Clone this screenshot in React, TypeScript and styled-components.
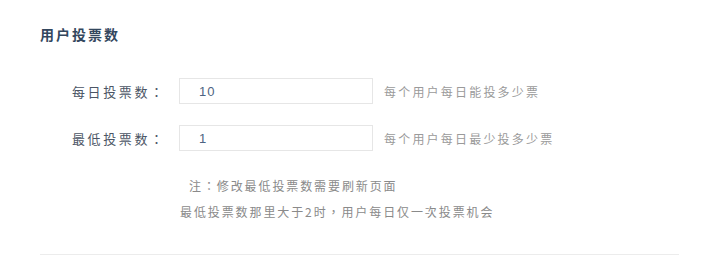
import React from "react";
import styled, { createGlobalStyle } from "styled-components";

const Global = createGlobalStyle`
  html, body { margin: 0; padding: 0; background: #fff; }
  body { font-family: "Noto Sans CJK SC", "Noto Sans", sans-serif; }
`;

const Page = styled.div`
  width: 718px;
  height: 255px;
  box-sizing: border-box;
  padding: 24px 39px 0 40px;
  display: flex;
  flex-direction: column;
  overflow: hidden;
`;

const Title = styled.h2`
  margin: 0;
  font-size: 14px;
  line-height: 20px;
  font-weight: 700;
  letter-spacing: 2px;
  color: #33475e;
`;

const Form = styled.div`
  display: flex;
  flex-direction: column;
  gap: 21px;
  margin-top: 34px;
`;

const Row = styled.div`
  display: flex;
  align-items: center;
`;

const Label = styled.label`
  width: 139px;
  box-sizing: border-box;
  padding-left: 32px;
  font-family: "Noto Sans CJK TC", "Noto Sans CJK SC", sans-serif;
  font-size: 13px;
  letter-spacing: 2.6px;
  color: #4b5565;
  white-space: nowrap;
`;

const Input = styled.div`
  width: 194px;
  height: 26px;
  box-sizing: border-box;
  border: 1px solid #e6e6e6;
  padding-left: 19px;
  display: flex;
  align-items: center;
  font-family: "Liberation Sans", "Noto Sans", sans-serif;
  font-size: 13px;
  letter-spacing: 1px;
  color: #4d6482;
`;

const Hint = styled.span`
  margin-left: 11px;
  font-size: 12px;
  letter-spacing: 2.2px;
  color: #9a9a9a;
  white-space: nowrap;
`;

const Notes = styled.div`
  display: flex;
  flex-direction: column;
  gap: 8px;
  margin-top: 26px;
  padding-left: 140px;
`;

const Note = styled.p<{ $indent?: number }>`
  margin: 0 0 0 ${(p) => p.$indent ?? 0}px;
  font-family: "Noto Sans CJK TC", "Noto Sans CJK SC", sans-serif;
  font-size: 12px;
  line-height: 18px;
  letter-spacing: 1.9px;
  color: #8a8a8a;
  white-space: nowrap;
`;

const Divider = styled.hr`
  border: 0;
  border-top: 1px solid #ececec;
  margin: 33px 0 0;
`;

export default function App() {
  return (
    <>
      <Global />
      <Page>
        <Title>用户投票数</Title>
        <Form>
          <Row>
            <Label>每日投票数：</Label>
            <Input>10</Input>
            <Hint>每个用户每日能投多少票</Hint>
          </Row>
          <Row>
            <Label>最低投票数：</Label>
            <Input>1</Input>
            <Hint>每个用户每日最少投多少票</Hint>
          </Row>
        </Form>
        <Notes>
          <Note $indent={9}>注：修改最低投票数需要刷新页面</Note>
          <Note>最低投票数那里大于2时，用户每日仅一次投票机会</Note>
        </Notes>
        <Divider />
      </Page>
    </>
  );
}
